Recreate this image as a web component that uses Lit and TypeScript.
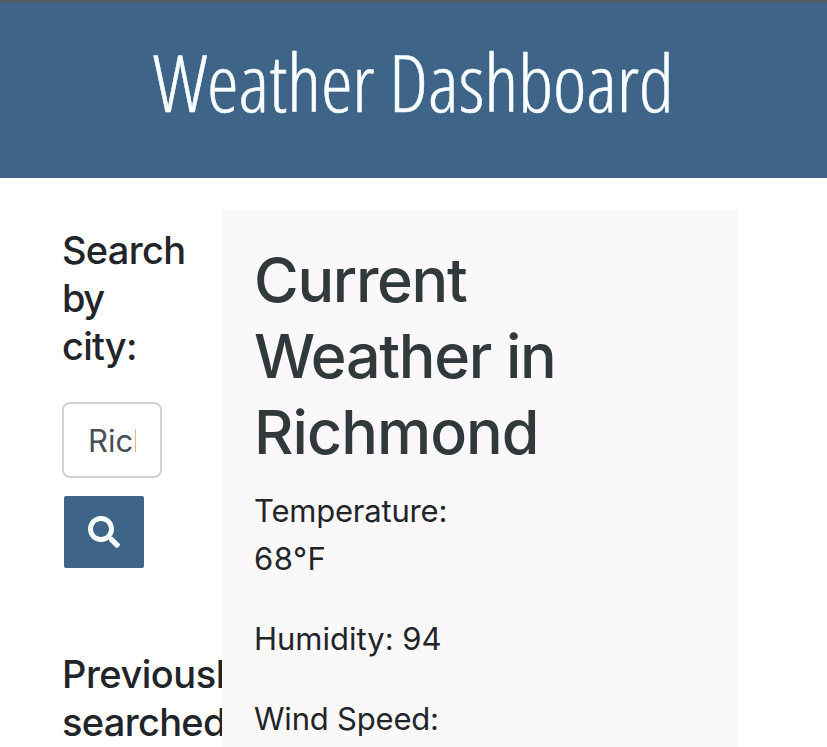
import { LitElement, html, css } from "lit";
import { customElement } from "lit/decorators.js";

@customElement("page-header")
export class PageHeader extends LitElement {
  static styles = css`
    :host {
      display: block;
      box-sizing: border-box;
      height: 178px;
      padding-top: 23px;
      border-top: 2px solid #585a5b;
      background: #3e6487;
    }
    h1 {
      margin: 0;
      color: #f8feff;
      font-family: "Open Sans", sans-serif;
      font-size: 80px;
      font-stretch: 75%;
      font-weight: 300;
      line-height: 112px;
      letter-spacing: -0.2px;
      text-align: center;
      white-space: nowrap;
      -webkit-text-stroke: 0.5px #f8feff;
    }
  `;

  render() {
    return html`<h1>Weather Dashboard</h1>`;
  }
}

@customElement("city-search")
export class CitySearch extends LitElement {
  static styles = css`
    :host {
      display: flex;
      flex-direction: column;
      align-items: flex-start;
    }
    h2 {
      margin: 0;
      font-size: 38px;
      font-weight: 530;
      line-height: 48px;
      letter-spacing: -0.7px;
      white-space: nowrap;
    }
    span {
      display: block;
    }
    .by {
      letter-spacing: -1.6px;
    }
    .city {
      letter-spacing: -0.8px;
    }
    .previous {
      letter-spacing: -0.5px;
    }
    input {
      box-sizing: border-box;
      width: 100px;
      height: 76px;
      margin: 32px 0 18px;
      padding: 0 24px;
      border: 2px solid #ced2d9;
      border-radius: 8px;
      outline: none;
      background: #fff;
      color: #495057;
      font: 400 31px/48px Inter, sans-serif;
    }
    button {
      display: flex;
      align-items: center;
      justify-content: center;
      width: 80px;
      height: 72px;
      margin: 0 0 82px 2px;
      padding: 0;
      border: 0;
      border-radius: 2px;
      background: #3e6487;
      color: #f8feff;
    }
    svg {
      width: 32px;
      height: 32px;
    }
  `;

  render() {
    return html`
      <h2><span>Search</span><span class="by">by</span><span class="city">city:</span></h2>
      <input type="text" aria-label="City" value="Richmond" />
      <button aria-label="Search">
        <svg viewBox="0 0 512 512" fill="currentColor">
          <path
            d="M505 442.700L405.300 343c-4.500-4.500-10.600-7-17-7H372c27.600-35.300 44-79.700 44-128C416 93.100 322.900 0 208 0S0 93.100 0 208s93.100 208 208 208c48.300 0 92.700-16.400 128-44v16.300c0 6.400 2.500 12.500 7 17l99.700 99.700c9.400 9.400 24.600 9.400 33.900 0l28.300-28.300c9.400-9.400 9.400-24.600.1-34zM208 336c-70.700 0-128-57.200-128-128 0-70.700 57.200-128 128-128 70.700 0 128 57.200 128 128 0 70.700-57.200 128-128 128z"
          />
        </svg>
      </button>
      <h2><span class="previous">Previously</span><span>searched</span></h2>
    `;
  }
}

@customElement("current-weather")
export class CurrentWeather extends LitElement {
  static styles = css`
    :host {
      display: block;
      padding: 32px 32px;
      background: #faf8f9;
    }
    h2 {
      margin: 0 0 17px;
      color: #32393c;
      font-size: 61px;
      font-weight: 530;
      line-height: 76px;
      letter-spacing: -1.3px;
      white-space: nowrap;
    }
    .city {
      letter-spacing: -0.95px;
    }
    p {
      margin: 0 0 32px;
      font-size: 31px;
      line-height: 48px;
      white-space: nowrap;
    }
    span {
      display: block;
    }
    .label {
      letter-spacing: -0.2px;
    }
    .value {
      letter-spacing: 0.5px;
    }
  `;

  render() {
    return html`
      <h2><span>Current</span><span>Weather in</span><span class="city">Richmond</span></h2>
      <p><span class="label">Temperature:</span><span class="value">68°F</span></p>
      <p><span>Humidity: 94</span></p>
      <p><span class="label">Wind Speed:</span></p>
    `;
  }
}

@customElement("app-root")
export class AppRoot extends LitElement {
  static styles = css`
    :host {
      display: flex;
      flex-direction: column;
      height: 100vh;
      overflow: hidden;
      background: #fff;
      color: #212529;
      font-family: Inter, sans-serif;
    }
    page-header {
      flex: none;
    }
    main {
      display: flex;
      flex: 1;
      min-height: 0;
      padding: 32px 89px 0 62px;
    }
    city-search {
      flex: none;
      width: 160px;
      padding-top: 16px;
      box-sizing: border-box;
      overflow: hidden;
    }
    current-weather {
      flex: 1;
      min-width: 0;
      overflow: hidden;
    }
  `;

  render() {
    return html`
      <page-header></page-header>
      <main>
        <city-search></city-search>
        <current-weather></current-weather>
      </main>
    `;
  }
}
